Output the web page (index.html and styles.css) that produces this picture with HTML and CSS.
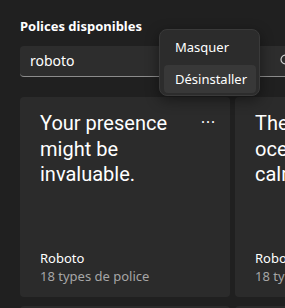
FILE: index.html
```html
<!DOCTYPE html>
<html lang="fr">
<head>
  <meta charset="utf-8">
  <title>Polices</title>
  <link rel="stylesheet" href="styles.css">
</head>
<body>
<div class="page">
  <h2 class="title">Polices disponibles</h2>
  <div class="search">
    <span class="search-text">roboto</span>
    <svg class="search-icon" width="14" height="14" viewBox="0 0 14 14"><circle cx="5.5" cy="5.5" r="4.5" fill="none" stroke="#cfcfcf" stroke-width="1.2"/><path d="M9 9l4 4" stroke="#cfcfcf" stroke-width="1.2"/></svg>
  </div>
  <div class="grid">
    <div class="card">
      <div class="card-head">
        <p class="sample">Your presence might be invaluable.</p>
        <span class="more">&middot;&middot;&middot;</span>
      </div>
      <div class="card-foot">
        <div class="name">Roboto</div>
        <div class="count">18 types de police</div>
      </div>
    </div>
    <div class="card">
      <div class="card-head">
        <p class="sample">The summer ocean seemed calm tonight.</p>
      </div>
      <div class="card-foot">
        <div class="name">Roboto</div>
        <div class="count">18 types de police</div>
      </div>
    </div>
    <div class="card"></div>
    <div class="card"></div>
  </div>
  <ul class="menu">
    <li>Masquer</li>
    <li class="hover">Désinstaller</li>
  </ul>
</div>
</body>
</html>
```

FILE: styles.css
```css
body,h2,p,ul,li{margin:0;padding:0;}
ul{list-style:none;}
html,body{background:#202020;}
body{font-family:"Noto Sans","Open Sans",sans-serif;color:#fff;overflow:hidden;}
.page{position:relative;padding:16px 0 0 20px;height:292px;overflow:hidden;}
.title{font-size:13px;line-height:20px;font-weight:700;margin-bottom:10px;}
.search{width:285px;height:31px;display:flex;align-items:center;justify-content:space-between;box-sizing:border-box;padding:0 11px 0 10px;background:#2d2d2d;border-radius:4px;border-bottom:1px solid #8c8c8c;}
.search-text{font-size:14px;line-height:20px;}
.search-icon{display:block;}
.grid{display:grid;grid-template-columns:210px 210px;column-gap:5px;row-gap:9px;margin-top:20px;}
.card{height:200px;box-sizing:border-box;padding:14px 14px 12px 20px;background:#2b2b2b;border-radius:4px;display:flex;flex-direction:column;justify-content:space-between;}
.card-head{display:flex;justify-content:space-between;align-items:flex-start;}
.sample{font-family:Roboto,sans-serif;font-size:20px;line-height:25.5px;width:150px;}
.more{font-size:15px;line-height:14px;letter-spacing:1px;margin-top:3px;}
.name{font-size:13px;line-height:18px;}
.count{font-size:13px;line-height:18px;color:#a6a6a6;}
.menu{position:absolute;left:159px;top:29px;width:101px;height:67px;box-sizing:border-box;padding:3px 3px 3px 4px;background:#2c2c2c;border:1px solid #3a3a3a;border-radius:8px;box-shadow:0 4px 14px rgba(0,0,0,.45);display:flex;flex-direction:column;gap:4px;}
.menu li{height:28px;line-height:28px;padding-left:11px;font-size:13px;border-radius:4px;}
.menu .hover{background:#383838;}
```
